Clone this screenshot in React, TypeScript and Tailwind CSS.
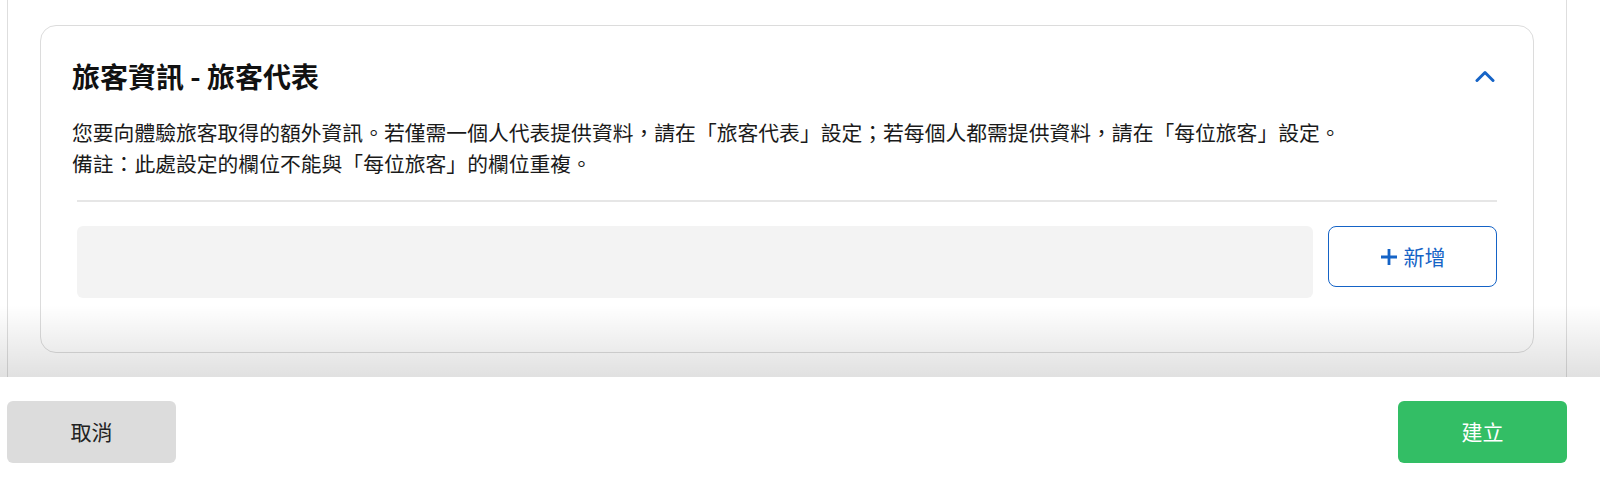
const font = {
	fontFamily: '"Noto Sans CJK TC", "Liberation Sans", sans-serif'
};

const ChevronUp = () => (
	<svg width="20" height="12" viewBox="0 0 20 12" fill="none">
		<path d="M2 10.5 L10 2.5 L18 10.5" stroke="#1563c6" strokeWidth="3" strokeLinecap="round" strokeLinejoin="round" />
	</svg>
);

const PlusIcon = () => (
	<svg width="18" height="18" viewBox="0 0 18 18" fill="none">
		<path d="M9 1 V17 M1 9 H17" stroke="#1563c6" strokeWidth="2.8" />
	</svg>
);

const App = () => {
	return (
		<div className="relative w-[1600px] h-[480px] bg-white" style={font}>
			<div className="ml-[7px] w-[1560px] h-full flex flex-col">
				{/* 捲動區 */}
				<div className="h-[377px] border-x border-[#dedede] overflow-hidden px-8 pt-[25px]">
					{/* 卡片 */}
					<div className="h-[328px] border border-[#dcdcdc] rounded-2xl bg-white">
						<div className="pl-[31px] pr-[38px] pt-[32px] flex items-center justify-between">
							<h3 className="text-[28px] leading-[36px] font-bold text-[#111]">旅客資訊 - 旅客代表</h3>
							<ChevronUp />
						</div>
						<p className="pl-[31px] mt-[23px] text-[20.8px] leading-[31px] text-[#1a1a1a]">
							您要向體驗旅客取得的額外資訊。若僅需一個人代表提供資料，請在「旅客代表」設定；若每個人都需提供資料，請在「每位旅客」設定。
							<br />
							備註：此處設定的欄位不能與「每位旅客」的欄位重複。
						</p>
						<div className="px-9 mt-[21px]">
							<div className="h-[2px] bg-[#e6e6e6]" />
							<div className="mt-[24px] flex items-start gap-[15px]">
								<div className="flex-1 h-[72px] bg-[#f3f3f3] rounded-md" />
								<button className="w-[169px] h-[61px] border-[1.5px] border-[#1563c6] rounded-lg flex items-center justify-center gap-[6px] text-[#1563c6] text-[21px]">
									<PlusIcon />
									<span>新增</span>
								</button>
							</div>
						</div>
					</div>
				</div>

				{/* 按鈕列 */}
				<div className="flex justify-between pt-6">
					<button className="w-[169px] h-[62px] rounded-md bg-[#dcdcdc] text-[21px] text-[#222]">取消</button>
					<button className="w-[169px] h-[62px] rounded-md bg-[#33be65] text-[21px] text-white">建立</button>
				</div>
			</div>

			{/* 底部陰影 */}
			<div className="absolute left-0 right-0 top-[305px] h-[72px] bg-gradient-to-b from-black/0 to-black/[0.12] pointer-events-none" />
		</div>
	);
};

export default App;
